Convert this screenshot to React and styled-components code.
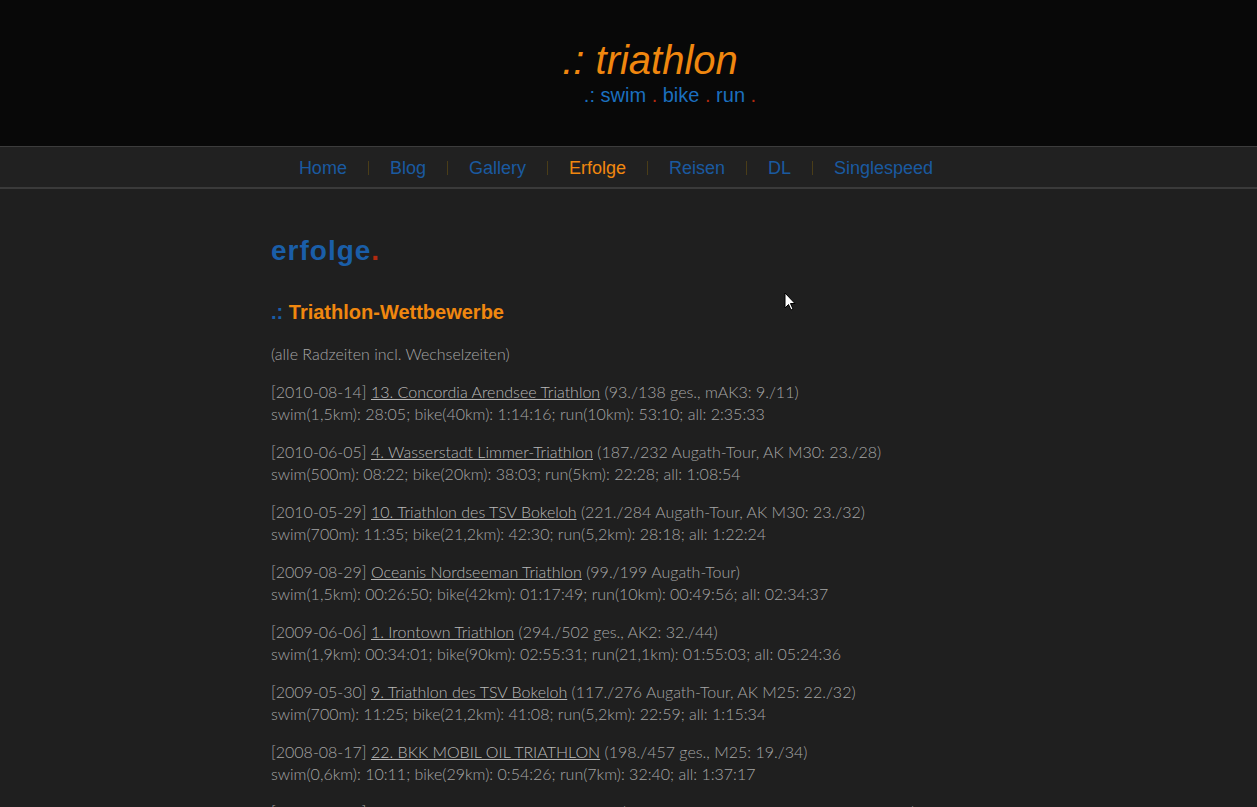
import React from "react";
import styled, { createGlobalStyle } from "styled-components";

const GlobalStyle = createGlobalStyle`
  html, body {
    margin: 0;
    padding: 0;
    background: #1f1f1f;
  }
  body {
    font-family: "Lato", "Liberation Sans", sans-serif;
  }
`;

const Page = styled.div`
  min-height: 807px;
  background: #1f1f1f;
  position: relative;
  overflow: hidden;
`;

const Header = styled.header`
  background: #080808;
  height: 147px;
  border-bottom: 1px solid #3c3c3c;
  display: flex;
  flex-direction: column;
  align-items: center;
  box-sizing: border-box;
  padding: 37px 0 0 43px;
  font-family: "Liberation Sans", Arial, sans-serif;
`;

const Title = styled.h1`
  margin: 0;
  font-size: 40px;
  font-weight: normal;
  font-style: italic;
  color: #f0870f;
  line-height: 46px;
`;

const Sub = styled.div`
  margin: 0 0 0 40px;
  font-size: 20px;
  line-height: 24px;
  color: #1b6fbf;
`;

const Dot = styled.span`
  color: ${(p) => p.$c || "#b32a0f"};
`;

const Nav = styled.nav`
  height: 42px;
  background: #212121;
  border-bottom: 2px solid #3a3a3a;
  display: flex;
  justify-content: center;
  align-items: center;
  padding-right: 25px;
  padding-top: 2px;
  box-sizing: border-box;
  font-family: "Liberation Sans", Arial, sans-serif;
  font-size: 18px;
`;

const NavItem = styled.a`
  color: ${(p) => (p.$active ? "#f0870f" : "#1a5aa0")};
  text-decoration: none;
  padding: 0 21px;
  line-height: 20px;
`;

const Sep = styled.span`
  width: 1px;
  height: 14px;
  background: #4a3d18;
`;

const Content = styled.main`
  width: 715px;
  margin-left: 271px;
  padding-top: 44px;
  color: #a6a6a6;
  font-size: 16px;
  font-weight: 300;
  line-height: 22px;
`;

const H2 = styled.h2`
  margin: 0;
  font-family: "Liberation Sans", Arial, sans-serif;
  font-size: 28px;
  font-weight: bold;
  letter-spacing: 1px;
  color: #1a5ea8;
  line-height: 36px;
`;

const H3 = styled.h3`
  margin: 29px 0 0 0;
  font-family: "Liberation Sans", Arial, sans-serif;
  font-size: 20px;
  font-weight: bold;
  color: #f0870f;
  line-height: 28px;
`;

const Para = styled.p`
  margin: 16px 0 0 0;
`;

const Intro = styled(Para)`
  margin-top: 17px;
`;

const Race = styled.a`
  color: #b8b8b8;
  text-decoration: underline;
`;

const Cursor = styled.svg`
  position: absolute;
  left: 784px;
  top: 292px;
`;

const nav = ["Home", "Blog", "Gallery", "Erfolge", "Reisen", "DL", "Singlespeed"];

const races = [
  ["2010-08-14", "13. Concordia Arendsee Triathlon", "(93./138 ges., mAK3: 9./11)", "swim(1,5km): 28:05; bike(40km): 1:14:16; run(10km): 53:10; all: 2:35:33"],
  ["2010-06-05", "4. Wasserstadt Limmer-Triathlon", "(187./232 Augath-Tour, AK M30: 23./28)", "swim(500m): 08:22; bike(20km): 38:03; run(5km): 22:28; all: 1:08:54"],
  ["2010-05-29", "10. Triathlon des TSV Bokeloh", "(221./284 Augath-Tour, AK M30: 23./32)", "swim(700m): 11:35; bike(21,2km): 42:30; run(5,2km): 28:18; all: 1:22:24"],
  ["2009-08-29", "Oceanis Nordseeman Triathlon", "(99./199 Augath-Tour)", "swim(1,5km): 00:26:50; bike(42km): 01:17:49; run(10km): 00:49:56; all: 02:34:37"],
  ["2009-06-06", "1. Irontown Triathlon", "(294./502 ges., AK2: 32./44)", "swim(1,9km): 00:34:01; bike(90km): 02:55:31; run(21,1km): 01:55:03; all: 05:24:36"],
  ["2009-05-30", "9. Triathlon des TSV Bokeloh", "(117./276 Augath-Tour, AK M25: 22./32)", "swim(700m): 11:25; bike(21,2km): 41:08; run(5,2km): 22:59; all: 1:15:34"],
  ["2008-08-17", "22. BKK MOBIL OIL TRIATHLON", "(198./457 ges., M25: 19./34)", "swim(0,6km): 10:11; bike(29km): 0:54:26; run(7km): 32:40; all: 1:37:17"],
  ["2008-06-28", "2. Hannover Triathlon am Maschsee", "(312./512 Volkstriathlon, AK M25: 41./60)", "swim(500m): 09:48; bike(20km): 39:12; run(5km): 23:40; all: 1:12:40"],
];

export default function App() {
  return (
    <Page>
      <GlobalStyle />
      <Header>
        <Title>.: triathlon</Title>
        <Sub>
          .: swim <Dot>.</Dot> bike <Dot>.</Dot> run <Dot>.</Dot>
        </Sub>
      </Header>
      <Nav>
        {nav.map((n, i) => (
          <React.Fragment key={n}>
            {i > 0 && <Sep />}
            <NavItem $active={n === "Erfolge"}>{n}</NavItem>
          </React.Fragment>
        ))}
      </Nav>
      <Content>
        <H2>
          erfolge<Dot>.</Dot>
        </H2>
        <H3>
          <Dot $c="#1a5ea8">.:</Dot> Triathlon-Wettbewerbe
        </H3>
        <Intro>(alle Radzeiten incl. Wechselzeiten)</Intro>
        {races.map(([d, name, res, times]) => (
          <Para key={d}>
            [{d}] <Race>{name}</Race> {res}
            <br />
            {times}
          </Para>
        ))}
      </Content>
      <Cursor width="12" height="19" viewBox="0 0 12 19">
        <path d="M1 1 L1 16 L4.5 12.5 L7 18 L9 17 L6.5 11.5 L11 11.5 Z" fill="#fff" stroke="#000" strokeWidth="1" />
      </Cursor>
    </Page>
  );
}
